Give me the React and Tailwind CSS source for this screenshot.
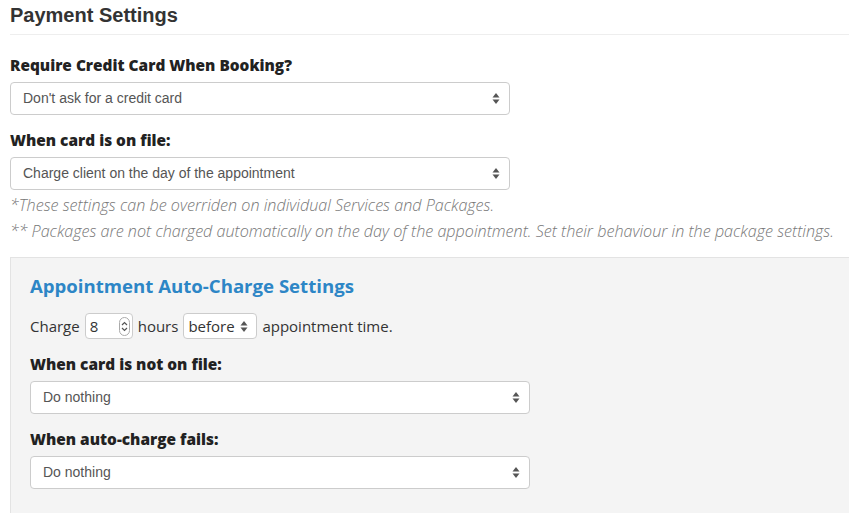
import React from "react";

const label = "font-['Open_Sans',sans-serif] font-extrabold text-[15.4px] text-[#222] leading-5 pt-[2px]";

function Arrows() {
  return (
    <svg width="8" height="13" viewBox="0 0 8 13" className="shrink-0">
      <path d="M4 1 L7.5 5.5 L0.5 5.5 Z" fill="#555" />
      <path d="M0.5 7.5 L7.5 7.5 L4 12 Z" fill="#555" />
    </svg>
  );
}

function Select({ value }) {
  return (
    <div className="w-[500px] h-[33px] bg-white border border-[#ccc] rounded-[4px] flex items-center justify-between pl-[12px] pr-[9px] font-['Liberation_Sans',Arial,sans-serif] text-[14px] text-[#555]">
      <span>{value}</span>
      <Arrows />
    </div>
  );
}

function Spinner() {
  return (
    <svg width="11" height="19" viewBox="0 0 11 19">
      <rect x="0.5" y="0.5" width="10" height="18" rx="5" fill="white" stroke="#aaa" />
      <path d="M3 8 L5.5 5.5 L8 8" fill="none" stroke="#555" strokeWidth="1.2" />
      <path d="M3 11 L5.5 13.5 L8 11" fill="none" stroke="#555" strokeWidth="1.2" />
    </svg>
  );
}

function Field({ title, value, className }) {
  return (
    <div className={className}>
      <p className={label}>{title}</p>
      <div className="mt-[6px]">
        <Select value={value} />
      </div>
    </div>
  );
}

export default function App() {
  return (
    <div className="w-[849px] h-[513px] overflow-hidden bg-white pl-[10px]">
      <h1 className="font-['Liberation_Sans',Arial,sans-serif] font-bold text-[20px] text-[#333] leading-6 pt-[3px] pb-[7px] border-b border-[#eee]">
        Payment Settings
      </h1>

      <Field className="mt-[19px]" title="Require Credit Card When Booking?" value="Don't ask for a credit card" />
      <Field className="mt-[14px]" title="When card is on file:" value="Charge client on the day of the appointment" />

      <div className="font-['Open_Sans',sans-serif] italic font-light text-[16.15px] text-[#777] mt-[2px] leading-[26px] whitespace-nowrap">
        <p>*These settings can be overriden on individual Services and Packages.</p>
        <p>** Packages are not charged automatically on the day of the appointment. Set their behaviour in the package settings.</p>
      </div>

      <div className="mt-[13px] bg-[#f4f4f4] border-t border-l border-[#e3e3e3] pl-[19px] pt-[16px] h-[300px]">
        <h2 className="font-['Open_Sans',sans-serif] font-bold text-[18.6px] text-[#2d86c6] leading-6">
          Appointment Auto-Charge Settings
        </h2>

        <div className="mt-[15px] flex items-center gap-[5px] font-['Open_Sans',sans-serif] text-[15px] text-[#333]">
          <span>Charge</span>
          <div className="w-[48px] h-[26px] bg-white border border-[#ccc] rounded-[4px] flex items-center justify-between pl-[4px] pr-[2px]">
            <span>8</span>
            <Spinner />
          </div>
          <span>hours</span>
          <div className="w-[74px] h-[26px] bg-white border border-[#ccc] rounded-[4px] flex items-center justify-between pl-[4px] pr-[8px]">
            <span>before</span>
            <Arrows />
          </div>
          <span>appointment time.</span>
        </div>

        <Field className="mt-[14px]" title="When card is not on file:" value="Do nothing" />
        <Field className="mt-[14px]" title="When auto-charge fails:" value="Do nothing" />
      </div>
    </div>
  );
}
